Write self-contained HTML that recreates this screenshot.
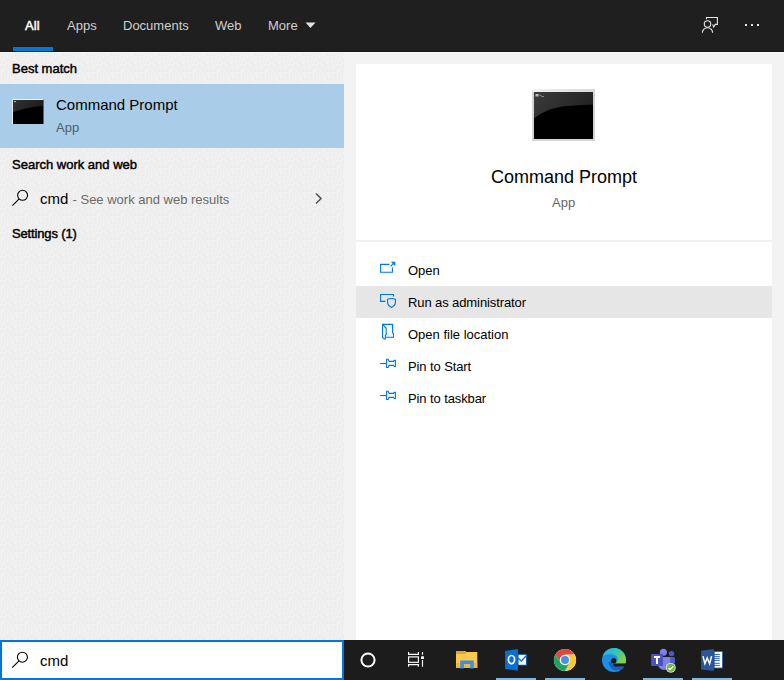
<!DOCTYPE html>
<html><head><meta charset="utf-8">
<style>
*{margin:0;padding:0;box-sizing:border-box}
html,body{width:784px;height:680px;overflow:hidden;background:#f3f3f3;font-family:"Liberation Sans",sans-serif;position:relative}
.a{position:absolute}
.t{position:absolute;line-height:1;white-space:nowrap}
#hdr{left:0;top:0;width:784px;height:52px;background:#1f1f1f}
#left{left:0;top:52px;width:344px;height:588px;background:#f0f0f0}
#sel{left:0;top:84px;width:344px;height:64px;background:#a9cce9}
#white{left:356px;top:64px;width:416px;height:576px;background:#fff}
#sep{left:356px;top:240px;width:416px;height:2px;background:#f0f0f0}
#hl{left:356px;top:286px;width:416px;height:32px;background:#e6e6e6}
#sbox{left:0;top:640px;width:344px;height:40px;background:#fff;border:2px solid #0078d7}
#task{left:344px;top:640px;width:440px;height:40px;background:#1c1c1c}
.tab{color:#d0d0d0;font-size:13px;top:19px}
.h{font-size:13px;color:#000;-webkit-text-stroke:0.45px #000}
.mi{font-size:13px;color:#000;left:408px}
.ind{position:absolute;top:678px;height:2px;width:40px;background:#76b9ed}
</style></head><body>
<div id="hdr" class="a"></div>
<div class="t tab" style="left:25px;top:19px;color:#fff;font-size:13px;-webkit-text-stroke:0.45px #fff;letter-spacing:0.1px">All</div>
<div class="t tab" style="left:67px">Apps</div>
<div class="t tab" style="left:123px">Documents</div>
<div class="t tab" style="left:215px">Web</div>
<div class="t tab" style="left:268px">More</div>
<svg class="a" style="left:305px;top:22px" width="11" height="7" viewBox="0 0 11 7"><path d="M0.5 0.5 H10.5 L5.5 6 Z" fill="#e0e0e0"/></svg>
<div class="a" style="left:13px;top:47px;width:40px;height:4px;background:#0078d7"></div>
<svg class="a" style="left:698px;top:12px" width="24" height="24" viewBox="0 0 24 24" fill="none" stroke="#e6e6e6" stroke-width="1.1">
<path d="M8.5 7.3 V5.5 H19.4 V12.4 H17.3 L15.7 15 L14.6 12.4"/>
<circle cx="9.5" cy="12" r="3.2"/>
<path d="M4.4 20.8 A5.1 5.1 0 0 1 14.6 20.8"/>
</svg>
<div class="a" style="left:745px;top:24px;width:2px;height:2px;background:#e8e8e8"></div>
<div class="a" style="left:751px;top:24px;width:2px;height:2px;background:#e8e8e8"></div>
<div class="a" style="left:757px;top:24px;width:2px;height:2px;background:#e8e8e8"></div>

<div id="left" class="a"></div>
<svg class="a" style="left:0;top:53px" width="344" height="587"><defs><pattern id="nz" width="24" height="24" patternUnits="userSpaceOnUse"><g fill="#e6e6e6"><rect x="0" y="0" width="1" height="1"/><rect x="0" y="8" width="1" height="1"/><rect x="0" y="14" width="1" height="1"/><rect x="1" y="4" width="1" height="1"/><rect x="2" y="2" width="1" height="1"/><rect x="2" y="14" width="1" height="1"/><rect x="3" y="0" width="1" height="1"/><rect x="3" y="10" width="1" height="1"/><rect x="3" y="20" width="1" height="1"/><rect x="3" y="22" width="1" height="1"/><rect x="4" y="8" width="1" height="1"/><rect x="5" y="18" width="1" height="1"/><rect x="6" y="0" width="1" height="1"/><rect x="6" y="6" width="1" height="1"/><rect x="6" y="14" width="1" height="1"/><rect x="6" y="16" width="1" height="1"/><rect x="6" y="20" width="1" height="1"/><rect x="7" y="8" width="1" height="1"/><rect x="7" y="12" width="1" height="1"/><rect x="8" y="6" width="1" height="1"/><rect x="9" y="0" width="1" height="1"/><rect x="9" y="4" width="1" height="1"/><rect x="9" y="14" width="1" height="1"/><rect x="9" y="16" width="1" height="1"/><rect x="9" y="20" width="1" height="1"/><rect x="10" y="8" width="1" height="1"/><rect x="11" y="10" width="1" height="1"/><rect x="11" y="18" width="1" height="1"/><rect x="11" y="22" width="1" height="1"/><rect x="12" y="4" width="1" height="1"/><rect x="12" y="8" width="1" height="1"/><rect x="12" y="14" width="1" height="1"/><rect x="12" y="16" width="1" height="1"/><rect x="13" y="12" width="1" height="1"/><rect x="13" y="20" width="1" height="1"/><rect x="15" y="0" width="1" height="1"/><rect x="15" y="2" width="1" height="1"/><rect x="15" y="12" width="1" height="1"/><rect x="15" y="16" width="1" height="1"/><rect x="15" y="18" width="1" height="1"/><rect x="17" y="2" width="1" height="1"/><rect x="17" y="10" width="1" height="1"/><rect x="18" y="0" width="1" height="1"/><rect x="18" y="6" width="1" height="1"/><rect x="18" y="12" width="1" height="1"/><rect x="18" y="16" width="1" height="1"/><rect x="18" y="18" width="1" height="1"/><rect x="18" y="20" width="1" height="1"/><rect x="20" y="2" width="1" height="1"/><rect x="21" y="6" width="1" height="1"/><rect x="21" y="10" width="1" height="1"/><rect x="21" y="18" width="1" height="1"/><rect x="21" y="22" width="1" height="1"/><rect x="22" y="0" width="1" height="1"/><rect x="22" y="4" width="1" height="1"/><rect x="22" y="16" width="1" height="1"/><rect x="23" y="2" width="1" height="1"/><rect x="23" y="18" width="1" height="1"/><rect x="23" y="22" width="1" height="1"/></g></pattern></defs><rect width="344" height="587" fill="url(#nz)"/></svg>
<div class="a" style="left:0;top:51px;width:784px;height:1px;background:#161616"></div>
<div class="a" style="left:0;top:52px;width:784px;height:1px;background:#fafafa"></div>
<div class="t h" style="left:12px;top:62px">Best match</div>
<div id="sel" class="a"></div>
<svg class="a" style="left:12px;top:99px" width="32" height="26" viewBox="0 0 32 26">
<defs><linearGradient id="gl1" x1="0" y1="0" x2="1" y2="0.3"><stop offset="0" stop-color="#303030"/><stop offset="1" stop-color="#1e1e1e"/></linearGradient></defs>
<rect x="0" y="0" width="31.5" height="25" fill="#000"/>
<path d="M1 1 H31 V7 Q22 7.5 16 9 Q6 11 1 13.5 Z" fill="url(#gl1)"/>
<rect x="0" y="0" width="31.5" height="1" fill="#f4f4f4"/>
<rect x="0" y="0" width="1" height="25" fill="#e8e8e8"/>
<rect x="2" y="2" width="2" height="1.2" fill="#aaa"/>
</svg>
<div class="t" style="left:56px;top:97px;font-size:15px;color:#000">Command Prompt</div>
<div class="t" style="left:56px;top:121px;font-size:13px;color:#4f5d6a">App</div>
<div class="t h" style="left:12px;top:158px">Search work and web</div>
<svg class="a" style="left:10px;top:188px" width="20" height="20" viewBox="0 0 20 20" fill="none" stroke="#000" stroke-width="1.1">
<circle cx="12.6" cy="7.3" r="5"/><path d="M9.2 10.9 L2.4 17.6"/>
</svg>
<div class="t" style="left:40px;top:191px;font-size:15px;color:#000">cmd <span style="font-size:13px;color:#6b6b6b">- See work and web results</span></div>
<svg class="a" style="left:312px;top:190px" width="14" height="16" viewBox="0 0 14 16" fill="none" stroke="#555" stroke-width="1.6"><path d="M4 3.5 L9 8.5 L4 13.5"/></svg>
<div class="t h" style="left:12px;top:227px;letter-spacing:-0.15px">Settings (1)</div>

<div id="white" class="a"></div>
<svg class="a" style="left:532px;top:89px" width="63" height="52" viewBox="0 0 63 52">
<defs><linearGradient id="gl2" x1="0" y1="0" x2="1" y2="0.4"><stop offset="0" stop-color="#3c3c3c"/><stop offset="1" stop-color="#222"/></linearGradient>
<linearGradient id="fr" x1="0" y1="0" x2="1" y2="0"><stop offset="0" stop-color="#f2f2f2"/><stop offset="1" stop-color="#d8d8d8"/></linearGradient></defs>
<rect x="0" y="0" width="63" height="52" fill="#d4d4d4"/>
<rect x="0" y="0" width="63" height="3" fill="url(#fr)"/>
<rect x="2" y="3" width="59" height="47" fill="#000"/>
<path d="M2 3 H61 V15.4 Q45 15.6 30 17.5 Q12 21 2 29.2 Z" fill="url(#gl2)"/>
<rect x="3.5" y="5" width="3" height="2.5" fill="#bbb"/><path d="M7 5.5 L10 7.5 H12" stroke="#999" stroke-width="0.8" fill="none"/>
</svg>
<div class="t" style="left:491px;top:168px;font-size:18px;color:#000">Command Prompt</div>
<div class="t" style="left:552px;top:196px;font-size:13px;color:#666">App</div>
<div id="sep" class="a"></div>
<div id="hl" class="a"></div>
<svg class="a" style="left:376px;top:256px" width="24" height="24" viewBox="0 0 24 24" fill="none" stroke="#0078d7" stroke-width="1.1">
<path d="M13.4 8.4 H4.6 V16.2 H16.4 V11.3"/><path d="M14.5 10.4 L17.6 7.3"/><path d="M16.1 6.3 L18.7 6.2 L18.7 8.8 Z" fill="#0078d7"/>
</svg>
<div class="t mi" style="top:264px">Open</div>
<svg class="a" style="left:376px;top:288px" width="24" height="24" viewBox="0 0 24 24" fill="none" stroke="#0078d7" stroke-width="1.1">
<path d="M9.5 13.4 H4.6 V6.5 H17.5 V8.5"/><path d="M11.6 11.3 Q15.5 9.6 19.4 11.3 V15 Q19.2 17.6 15.5 19.4 Q11.8 17.6 11.6 15 Z"/>
</svg>
<div class="t mi" style="top:296px;letter-spacing:-0.1px">Run as administrator</div>
<svg class="a" style="left:376px;top:320px" width="24" height="24" viewBox="0 0 24 24" fill="none" stroke="#0078d7" stroke-width="1.1">
<path d="M9.5 17.3 H17.5 V13.5 L16.6 13 V4.4 H6.5 V17.5 L8.8 19.4"/><path d="M6.5 4.4 L10.2 8.3 V14.5 L9.3 15.3 V19.4"/>
</svg>
<div class="t mi" style="top:328px">Open file location</div>
<svg class="a" style="left:376px;top:352px" width="24" height="24" viewBox="0 0 24 24" fill="none" stroke="#0078d7" stroke-width="1.1">
<path d="M4.2 11.5 H10.2"/><path d="M10.6 7.2 H12 Q12.6 7.4 13 9.4 H17.5 Q17.9 8.4 18.5 8.4 H19.4 V14.5 H18.4 Q17.9 14.5 17.5 13.4 H13 Q12.6 15.3 12 15.5 H10.6 Z"/>
</svg>
<div class="t mi" style="top:360px;letter-spacing:-0.1px">Pin to Start</div>
<svg class="a" style="left:376px;top:384px" width="24" height="24" viewBox="0 0 24 24" fill="none" stroke="#0078d7" stroke-width="1.1">
<path d="M4.2 11.5 H10.2"/><path d="M10.6 7.2 H12 Q12.6 7.4 13 9.4 H17.5 Q17.9 8.4 18.5 8.4 H19.4 V14.5 H18.4 Q17.9 14.5 17.5 13.4 H13 Q12.6 15.3 12 15.5 H10.6 Z"/>
</svg>
<div class="t mi" style="top:392px;letter-spacing:-0.1px">Pin to taskbar</div>

<div id="sbox" class="a"></div>
<svg class="a" style="left:10px;top:650px" width="20" height="20" viewBox="0 0 20 20" fill="none" stroke="#000" stroke-width="1.1">
<circle cx="12.4" cy="7.2" r="5"/><path d="M9 10.8 L2.2 17.6"/>
</svg>
<div class="t" style="left:40px;top:653px;font-size:15px;color:#000">cmd</div>

<div id="task" class="a"></div>
<svg class="a" style="left:354px;top:646px" width="28" height="28" viewBox="0 0 28 28"><circle cx="14" cy="14" r="6.6" fill="none" stroke="#fff" stroke-width="2"/></svg>
<svg class="a" style="left:400px;top:646px" width="28" height="28" viewBox="0 0 28 28" fill="none" stroke="#fff" stroke-width="1.15">
<path d="M8.6 6 V8.3 H18.4 V6"/><rect x="8.6" y="10.9" width="9.8" height="5.4"/><path d="M8.6 20.8 V18.6 H18.4 V20.8"/>
<path d="M22.5 6 V8.8 M22.5 14 V20.8"/><rect x="21.1" y="10.3" width="2.8" height="2.7" fill="#fff" stroke="none"/>
</svg>
<svg class="a" style="left:452px;top:646px" width="30" height="26" viewBox="0 0 30 26">
<path d="M4 5 H13.3 L14.2 5.9 H25.3 V22 H4 Z" fill="#fcc84d"/>
<path d="M4 5 H13.3 L14.2 5.9 V7.9 H4 Z" fill="#e1a531"/>
<rect x="4" y="17" width="21.3" height="5" fill="#f2b53c"/>
<path d="M8.2 22.6 V14.5 H21.8 V22.6 H18.2 V18 H11.9 V22.6 Z" fill="#3d8ee6"/>
</svg>
<svg class="a" style="left:502px;top:646px" width="28" height="28" viewBox="0 0 28 28">
<rect x="15.9" y="8.2" width="8.8" height="11.2" fill="#0f6fd0"/>
<rect x="16.6" y="8.9" width="7.4" height="9.8" fill="#fff"/>
<path d="M16.2 12.3 L19.4 15 L24.3 9.7" fill="none" stroke="#0f6fd0" stroke-width="1.4"/>
<path d="M3.1 4.9 L15.9 3.1 V24.7 L3.1 22.9 Z" fill="#0a6fd0"/>
<ellipse cx="9.5" cy="13.6" rx="3.1" ry="4.1" fill="none" stroke="#fff" stroke-width="1.7"/>
</svg>
<svg class="a" style="left:551px;top:646px" width="28" height="28" viewBox="0 0 28 28">
<circle cx="14" cy="14" r="11.1" fill="#fff"/>
<path d="M23.61 8.45 A11.1 11.1 0 0 0 4.39 8.45 L9.50 16.60 A5.2 5.2 0 0 1 14.00 8.80 Z" fill="#db4a3d"/><path d="M14.00 25.10 A11.1 11.1 0 0 0 23.61 8.45 L14.00 8.80 A5.2 5.2 0 0 1 18.50 16.60 Z" fill="#fcc934"/><path d="M4.39 8.45 A11.1 11.1 0 0 0 14.00 25.10 L18.50 16.60 A5.2 5.2 0 0 1 9.50 16.60 Z" fill="#1ea362"/>
<circle cx="14" cy="14" r="5.1" fill="#fff"/><circle cx="14" cy="14" r="4" fill="#4a8fe8"/>
</svg>
<svg class="a" style="left:600px;top:646px" width="28" height="28" viewBox="0 0 28 28">
<defs><linearGradient id="eg" x1="0" y1="0" x2="1" y2="0.6"><stop offset="0" stop-color="#26b0e6"/><stop offset="0.55" stop-color="#33c3b8"/><stop offset="1" stop-color="#86d33a"/></linearGradient></defs>
<circle cx="14" cy="14" r="12" fill="#1d8ee6"/>
<path d="M2.6 10.2 A12 12 0 0 1 26 14.5 L25.5 17.5 H15.5 Q19.5 14 16.5 10 Q10 6 2.6 10.2 Z" fill="url(#eg)"/>
<path d="M8.6 16 Q9 22 14 24 Q19.5 25.5 24 20.5 L15 20 Q12 19 11.5 15.5 Z" fill="#1f5fb5"/>
<circle cx="13.6" cy="14.8" r="2.7" fill="#1c1c1c"/>
<path d="M14.8 17.4 H26 V20.4 H14.8 Q13 19.5 13 17.4 Z" fill="#1c1c1c"/>
</svg>
<svg class="a" style="left:648px;top:646px" width="30" height="28" viewBox="0 0 30 28">
<circle cx="23.5" cy="7.6" r="2.7" fill="#5059c9"/>
<rect x="19" y="10.9" width="8" height="6.8" rx="1.5" fill="#5059c9"/>
<circle cx="15.4" cy="6.2" r="3.5" fill="#7b83eb"/>
<path d="M9.9 10.9 H22.2 V18.5 A6.2 6.2 0 0 1 9.9 18.5 Z" fill="#7b83eb"/>
<rect x="3.1" y="8" width="11.9" height="12" fill="#4b53bc"/>
<path d="M6 10 H12.1 V11.9 H10 V17.9 H8 V11.9 H6 Z" fill="#fff"/>
<circle cx="22.8" cy="21.8" r="4.9" fill="#f0f0e0"/>
<circle cx="22.8" cy="21.8" r="4.1" fill="#6cbf3a"/>
<path d="M20.4 21.9 L22.1 23.5 L25.2 20.3" fill="none" stroke="#fff" stroke-width="1.3"/>
</svg>
<svg class="a" style="left:698px;top:646px" width="28" height="28" viewBox="0 0 28 28">
<rect x="15.9" y="5.1" width="9" height="17.3" fill="#2b5fb3"/>
<rect x="16.7" y="5.9" width="7.4" height="15.7" fill="#fff"/>
<g stroke="#2b5fb3" stroke-width="1"><path d="M15.9 8.4 H21.8 M15.9 10.4 H21.8 M15.9 12.4 H21.8 M15.9 14.4 H21.8 M15.9 17.3 H21.8 M15.9 19.4 H21.8"/></g>
<path d="M3.1 4.7 L15.9 3.1 V24.9 L3.1 23.5 Z" fill="#2b5797"/>
<path d="M5 10.1 L6.9 17.7 L9.2 12 L11.6 17.7 L13.6 10.1" fill="none" stroke="#fff" stroke-width="1.5"/>
</svg>
<div class="ind" style="left:496px"></div>
<div class="ind" style="left:545px"></div>
<div class="ind" style="left:643px"></div>
<div class="ind" style="left:692px"></div>
</body></html>
